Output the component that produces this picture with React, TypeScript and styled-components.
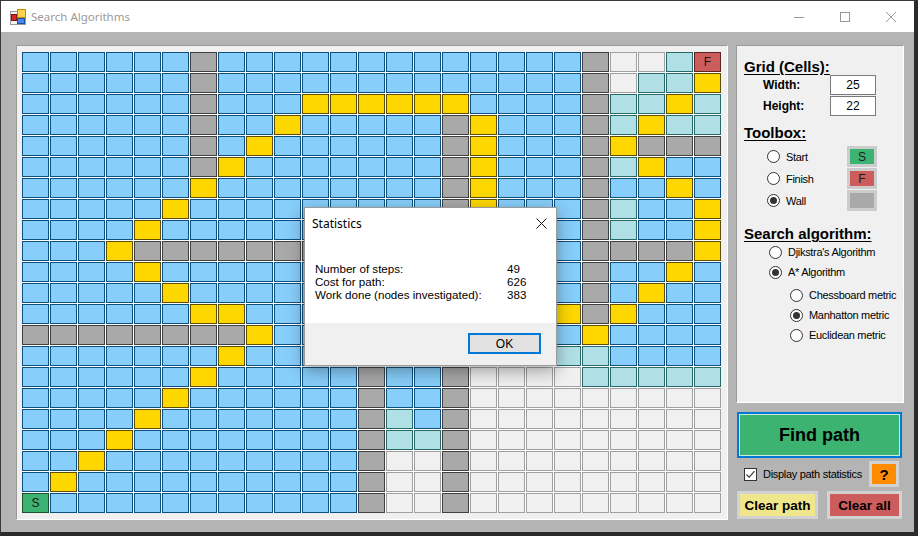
import { Fragment } from "react";
import styled, { createGlobalStyle } from "styled-components";

type CellKind = "b" | "w" | "y" | "e" | "c" | "S" | "F";

// b = visited, w = wall, y = path, e = empty, c = open set
const GRID_ROWS = [
  "bbbbbbwbbbbbbbbbbbbbweecF",
  "bbbbbbwbbbbbbbbbbbbbweccy",
  "bbbbbbwbbbyyyyyybbbbwccyc",
  "bbbbbbwbbybbbbbwybbbwcycc",
  "bbbbbbwbybbbbbbwybbbwywww",
  "bbbbbbwybbbbbbbwybbbwcybb",
  "bbbbbbybbbbbbbbwybbbwbbyb",
  "bbbbbybbbbbbbbbwybbbwcbby",
  "bbbbybbbbbbbbbbwybbbwcbby",
  "bbbywwwwwwwwbbbwybbbwwwwy",
  "bbbbybbbbbbbbbbwbybbwbbyb",
  "bbbbbybbbbbbbbbwbbybwbybb",
  "bbbbbbyybbbbbbbwbbbywybbb",
  "wwwwwwwwybbbbbbwbbbbybbbb",
  "bbbbbbbybbbbwbbwbbbccbbbb",
  "bbbbbbybbbbbwbbweeeeccccc",
  "bbbbbybbbbbbwbbweeeeeeeee",
  "bbbbybbbbbbbwcbweeeeeeeee",
  "bbbybbbbbbbbwccweeeeeeeee",
  "bbybbbbbbbbbweeweeeeeeeee",
  "bybbbbbbbbbbweeweeeeeeeee",
  "Sbbbbbbbbbbbweeweeeeeeeee",
];

const palette: Record<CellKind, { bg: string; line: string }> = {
  b: { bg: "#87cefa", line: "#0d4f7e" },
  w: { bg: "#a9a9a9", line: "#404040" },
  y: { bg: "#ffd700", line: "#5c4d00" },
  e: { bg: "#f0f0f0", line: "#a0a0a0" },
  c: { bg: "#b0e0e6", line: "#266a6a" },
  S: { bg: "#3cb371", line: "#1d4f30" },
  F: { bg: "#cd5c5c", line: "#5e2222" },
};

const GlobalStyle = createGlobalStyle`
  html, body {
    margin: 0;
    padding: 0;
    background: #ffffff;
  }
  body {
    font-family: "Liberation Sans", Arial, sans-serif;
    color: #000;
  }
`;

const Window = styled.div`
  position: relative;
  width: 918px;
  height: 536px;
  box-sizing: border-box;
  border-style: solid;
  border-width: 1px 4px 4px 1px;
  border-color: #3a3a3a #2a2a2a #2a2a2a #3a3a3a;
  display: flex;
  flex-direction: column;
  overflow: hidden;
`;

const TitleBar = styled.div`
  height: 31px;
  flex: none;
  display: flex;
  align-items: center;
  background: #ffffff;
`;

const AppIcon = styled.svg`
  flex: none;
  margin: 0 5px 0 9px;
`;

const Caption = styled.span`
  flex: 1;
  font-family: "Noto Sans", "Liberation Sans", sans-serif;
  font-size: 11.5px;
  color: #9a9a9a;
`;

const CaptionButton = styled.div`
  width: 46px;
  height: 31px;
  display: flex;
  align-items: center;
  justify-content: center;
`;

const Client = styled.div`
  flex: 1;
  background: #b4b4b4;
  display: flex;
  align-items: flex-start;
  gap: 8px;
  padding: 13px 0 0 15px;
`;

const SunkenPanel = styled.div`
  box-sizing: border-box;
  background: #f0f0f0;
  border: 1px solid;
  border-color: #9a9a9a #ffffff #ffffff #9a9a9a;
`;

const GridPanel = styled(SunkenPanel)`
  width: 712px;
  height: 475px;
  padding: 6px 0 0 5px;
`;

const CellGrid = styled.div`
  display: grid;
  grid-template-columns: repeat(25, 27px);
  grid-auto-rows: 20px;
  gap: 1px;
  background: #ffffff;
  width: max-content;
`;

const Cell = styled.div<{ $kind: CellKind }>`
  box-sizing: border-box;
  border: 1px solid ${({ $kind }) => palette[$kind].line};
  background: ${({ $kind }) => palette[$kind].bg};
  display: flex;
  align-items: center;
  justify-content: center;
  font-size: 12px;
  color: #1a1a1a;
`;

const RightColumn = styled.div`
  width: 168px;
  display: flex;
  flex-direction: column;
`;

const SidePanel = styled(SunkenPanel)`
  height: 358px;
  padding: 12px 0 0 7px;
  display: flex;
  flex-direction: column;
`;

const SectionTitle = styled.div<{ $gap: number }>`
  margin-top: ${({ $gap }) => $gap}px;
  height: 17px;
  line-height: 17px;
  font-size: 15px;
  font-weight: bold;
  text-decoration: underline;
  text-underline-offset: 2px;
`;

const FieldRow = styled.div<{ $gap: number }>`
  margin-top: ${({ $gap }) => $gap}px;
  height: 20px;
  display: flex;
  align-items: center;
`;

const FieldLabel = styled.span`
  width: 67px;
  padding-left: 19px;
  font-size: 12px;
  font-weight: bold;
`;

const FieldInput = styled.input`
  width: 46px;
  height: 20px;
  box-sizing: border-box;
  border: 1px solid #7a7a7a;
  background: #ffffff;
  padding: 0;
  margin: 0;
  text-align: center;
  font-family: "Liberation Sans", Arial, sans-serif;
  font-size: 12px;
  color: #000;
  outline: none;
`;

const ToolRow = styled.div<{ $gap: number }>`
  margin-top: ${({ $gap }) => $gap}px;
  height: 21px;
  display: flex;
  align-items: center;
  padding-left: 23px;
`;

const Radio = styled.span<{ $checked?: boolean }>`
  flex: none;
  width: 13px;
  height: 13px;
  box-sizing: border-box;
  border: 1px solid #333333;
  border-radius: 50%;
  background: #ffffff;
  display: flex;
  align-items: center;
  justify-content: center;
  &::after {
    content: "";
    width: 7px;
    height: 7px;
    border-radius: 50%;
    background: ${({ $checked }) => ($checked ? "#333333" : "transparent")};
  }
`;

const OptionLabel = styled.span<{ $width?: number }>`
  margin-left: 6px;
  width: ${({ $width }) => ($width ? `${$width}px` : "auto")};
  font-size: 11px;
  letter-spacing: -0.3px;
  white-space: nowrap;
`;

const Swatch = styled.div<{ $color: string }>`
  width: 30px;
  height: 21px;
  box-sizing: border-box;
  border: 3px solid #cccccc;
  background: ${({ $color }) => $color};
  display: flex;
  align-items: center;
  justify-content: center;
  font-size: 12px;
  color: #1a1a1a;
`;

const AlgoRow = styled.div<{ $indent: number; $gap?: number }>`
  margin-top: ${({ $gap }) => $gap ?? 0}px;
  height: 20px;
  display: flex;
  align-items: center;
  padding-left: ${({ $indent }) => $indent}px;
`;

const FindButton = styled.div`
  margin: 9px 0 0 1px;
  width: 165px;
  height: 46px;
  box-sizing: border-box;
  border: 2px solid #0078d7;
  box-shadow: inset 0 0 0 1px #c9eed8;
  background: #3cb371;
  display: flex;
  align-items: center;
  justify-content: center;
  font-size: 18px;
  font-weight: bold;
`;

const OptionsRow = styled.div`
  margin-top: 3px;
  height: 26px;
  display: flex;
  align-items: center;
  padding-left: 8px;
`;

const CheckBox = styled.span`
  flex: none;
  width: 13px;
  height: 13px;
  box-sizing: border-box;
  border: 1px solid #333333;
  background: #ffffff;
  display: flex;
  align-items: center;
  justify-content: center;
`;

const FlatButton = styled.div<{ $color: string; $width: number; $height: number }>`
  width: ${({ $width }) => $width}px;
  height: ${({ $height }) => $height}px;
  box-sizing: border-box;
  border: 3px solid #d2d2d2;
  background: ${({ $color }) => $color};
  display: flex;
  align-items: center;
  justify-content: center;
  font-weight: bold;
  flex: none;
`;

const HelpButton = styled(FlatButton)`
  margin: 0 5px 0 auto;
  font-size: 15px;
`;

const ButtonRow = styled.div`
  margin-top: 4px;
  display: flex;
  padding-left: 1px;
  gap: 9px;
  font-size: 13.5px;
`;

const Dialog = styled.div`
  position: absolute;
  left: 303px;
  top: 206px;
  width: 253px;
  height: 159px;
  box-sizing: border-box;
  border: 1px solid #9a9a9a;
  background: #f0f0f0;
  box-shadow: 0 5px 16px rgba(0, 0, 0, 0.35);
  display: flex;
  flex-direction: column;
`;

const DialogHeader = styled.div`
  height: 31px;
  flex: none;
  background: #ffffff;
  display: flex;
  align-items: center;
  padding: 0 9px 0 7px;
  font-family: "Noto Sans", "Liberation Sans", sans-serif;
  font-size: 12px;
  color: #000;
`;

const DialogTitle = styled.span`
  flex: 1;
`;

const DialogBody = styled.div`
  flex: 1;
  background: #ffffff;
  padding: 23px 0 0 10px;
  display: grid;
  grid-template-columns: 192px auto;
  align-content: start;
  font-size: 11.6px;
  line-height: 13px;
`;

const DialogFooter = styled.div`
  height: 42px;
  flex: none;
  display: flex;
  justify-content: flex-end;
  align-items: flex-start;
  padding: 10px 15px 0 0;
  box-sizing: border-box;
`;

const OkButton = styled.div`
  width: 73px;
  height: 21px;
  box-sizing: border-box;
  border: 2px solid #0078d7;
  background: #e1e1e1;
  display: flex;
  align-items: center;
  justify-content: center;
  font-size: 12px;
`;

const stats = [
  ["Number of steps:", "49"],
  ["Cost for path:", "626"],
  ["Work done (nodes investigated):", "383"],
];

export default function App() {
  return (
    <>
      <GlobalStyle />
      <Window>
        <TitleBar>
          <AppIcon width="16" height="16" viewBox="0 0 16 16">
            <rect x="0.5" y="2.5" width="15" height="13" fill="#f4f4f4" stroke="#9a9a9a" />
            <rect x="7.5" y="0.5" width="8" height="8" fill="#ffd34d" stroke="#c98a00" />
            <rect x="1.5" y="5.5" width="5" height="6" fill="#d6281c" stroke="#7c1710" />
            <rect x="7.5" y="9.5" width="7" height="5" fill="#4a86e8" stroke="#1f4fa8" />
          </AppIcon>
          <Caption>Search Algorithms</Caption>
          <CaptionButton>
            <svg width="10" height="10" viewBox="0 0 10 10">
              <line x1="0" y1="5.5" x2="10" y2="5.5" stroke="#999" />
            </svg>
          </CaptionButton>
          <CaptionButton>
            <svg width="10" height="10" viewBox="0 0 10 10">
              <rect x="0.5" y="0.5" width="9" height="9" fill="none" stroke="#999" />
            </svg>
          </CaptionButton>
          <CaptionButton>
            <svg width="10" height="10" viewBox="0 0 10 10">
              <path d="M0 0L10 10M10 0L0 10" stroke="#999" />
            </svg>
          </CaptionButton>
        </TitleBar>

        <Client>
          <GridPanel>
            <CellGrid>
              {GRID_ROWS.flatMap((row, r) =>
                row.split("").map((k, c) => (
                  <Cell key={`${r}-${c}`} $kind={k as CellKind}>
                    {k === "S" || k === "F" ? k : null}
                  </Cell>
                ))
              )}
            </CellGrid>
          </GridPanel>

          <RightColumn>
            <SidePanel>
              <SectionTitle $gap={0}>Grid (Cells):</SectionTitle>
              <FieldRow $gap={0}>
                <FieldLabel>Width:</FieldLabel>
                <FieldInput readOnly value="25" />
              </FieldRow>
              <FieldRow $gap={1}>
                <FieldLabel>Height:</FieldLabel>
                <FieldInput readOnly value="22" />
              </FieldRow>

              <SectionTitle $gap={8}>Toolbox:</SectionTitle>
              <ToolRow $gap={5}>
                <Radio />
                <OptionLabel $width={61}>Start</OptionLabel>
                <Swatch $color="#3cb371">S</Swatch>
              </ToolRow>
              <ToolRow $gap={1}>
                <Radio />
                <OptionLabel $width={61}>Finish</OptionLabel>
                <Swatch $color="#cd5c5c">F</Swatch>
              </ToolRow>
              <ToolRow $gap={1}>
                <Radio $checked />
                <OptionLabel $width={61}>Wall</OptionLabel>
                <Swatch $color="#a9a9a9" />
              </ToolRow>

              <SectionTitle $gap={14}>Search algorithm:</SectionTitle>
              <AlgoRow $indent={25}>
                <Radio />
                <OptionLabel>Djikstra's Algorithm</OptionLabel>
              </AlgoRow>
              <AlgoRow $indent={25}>
                <Radio $checked />
                <OptionLabel>A* Algorithm</OptionLabel>
              </AlgoRow>
              <AlgoRow $indent={46} $gap={3}>
                <Radio />
                <OptionLabel>Chessboard metric</OptionLabel>
              </AlgoRow>
              <AlgoRow $indent={46}>
                <Radio $checked />
                <OptionLabel>Manhatton metric</OptionLabel>
              </AlgoRow>
              <AlgoRow $indent={46}>
                <Radio />
                <OptionLabel>Euclidean metric</OptionLabel>
              </AlgoRow>
            </SidePanel>

            <FindButton>Find path</FindButton>

            <OptionsRow>
              <CheckBox>
                <svg width="11" height="11" viewBox="0 0 11 11">
                  <path d="M1.5 5.5L4.2 8.2L9.5 2.2" fill="none" stroke="#333" strokeWidth="1.1" />
                </svg>
              </CheckBox>
              <OptionLabel>Display path statistics</OptionLabel>
              <HelpButton $color="#ff8c00" $width={30} $height={26}>
                ?
              </HelpButton>
            </OptionsRow>

            <ButtonRow>
              <FlatButton $color="#f0e68c" $width={81} $height={28}>
                Clear path
              </FlatButton>
              <FlatButton $color="#cd5c5c" $width={75} $height={28}>
                Clear all
              </FlatButton>
            </ButtonRow>
          </RightColumn>
        </Client>

        <Dialog>
          <DialogHeader>
            <DialogTitle>Statistics</DialogTitle>
            <svg width="11" height="11" viewBox="0 0 11 11">
              <path d="M0.5 0.5L10.5 10.5M10.5 0.5L0.5 10.5" stroke="#111" />
            </svg>
          </DialogHeader>
          <DialogBody>
            {stats.map(([label, value]) => (
              <Fragment key={label}>
                <span>{label}</span>
                <span>{value}</span>
              </Fragment>
            ))}
          </DialogBody>
          <DialogFooter>
            <OkButton>OK</OkButton>
          </DialogFooter>
        </Dialog>
      </Window>
    </>
  );
}
